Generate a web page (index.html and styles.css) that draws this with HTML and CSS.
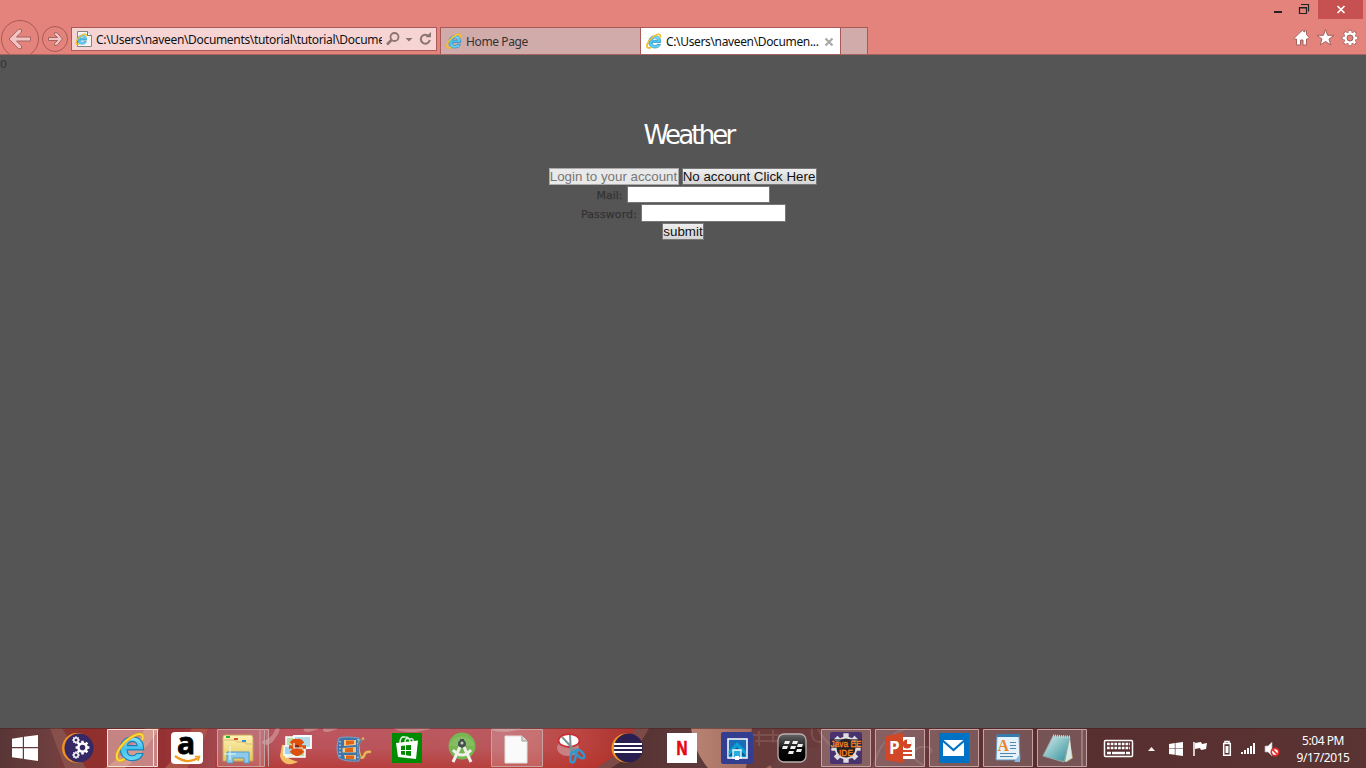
FILE: index.html
```html
<!DOCTYPE html>
<html lang="en">
<head>
<meta charset="utf-8">
<title>Weather</title>
<link rel="stylesheet" href="styles.css">
</head>
<body>
<svg width="0" height="0" class="defs">
  <defs>
    <linearGradient id="blue" x1="0" y1="0" x2="0" y2="1"><stop offset="0" stop-color="#8be6fb"/><stop offset=".5" stop-color="#43c1ed"/><stop offset="1" stop-color="#6fd8f8"/></linearGradient>
    <symbol id="ie" viewBox="0 0 32 32">
      <path fill-rule="evenodd" d="M29.500 19H12.500C12.500 23 15 25 18 25C20 25 21.500 24 22.300 22.700H29C27.500 27.500 23.500 30 17.800 30C10.500 30 5.500 25 5.500 18C5.500 10.500 10.500 5.500 17.800 5.500C25.500 5.500 30 10.500 29.500 19ZM12.800 14.500H22.800C22.500 11.800 20.500 10.200 17.800 10.200C15 10.200 13.200 12 12.800 14.500Z" fill="url(#blue)" stroke="#1682bd" stroke-width="1.200"/>
      <path d="M28 9C30.500 3 26.500 1 20 4.200C10 9 1.500 19.500 1.800 26C2 31.500 6.500 30.500 10 28.500" fill="none" stroke="#e3a416" stroke-width="3.200"/>
      <path d="M28 9C30.500 3 26.500 1 20 4.200C10 9 1.500 19.500 1.800 26C2 31.500 6.500 30.500 10 28.500" fill="none" stroke="#fddc3e" stroke-width="1.800"/>
    </symbol>
    <symbol id="win" viewBox="0 0 26 26"><path d="M0 3.7L10.8 2V12H0ZM12 1.8L26 0V12H12ZM0 13.2H10.8V23.8L0 22.2ZM12 13.2H26V26L12 24Z" fill="#fff"/></symbol>
    <symbol id="gear" viewBox="0 0 24 24"><circle cx="12" cy="12" r="6.5" fill="none" stroke="currentColor" stroke-width="4"/><path d="M12 1V6M12 18V23M1 12H6M18 12H23M4.2 4.2L8 8M16 16L19.8 19.8M4.2 19.8L8 16M16 8L19.8 4.2" stroke="currentColor" stroke-width="4"/></symbol>
    <linearGradient id="gloss" x1="0" y1="0" x2="0" y2="1"><stop offset="0" stop-color="#666"/><stop offset=".45" stop-color="#222"/><stop offset=".5" stop-color="#080808"/><stop offset="1" stop-color="#000"/></linearGradient>
    <linearGradient id="glass" x1="0" y1="0" x2="1" y2="1"><stop offset="0" stop-color="#d9eeee"/><stop offset="1" stop-color="#2c8e98"/></linearGradient>
    <linearGradient id="folder" x1="0" y1="0" x2="0" y2="1"><stop offset="0" stop-color="#fff3b5"/><stop offset="1" stop-color="#e5c75f"/></linearGradient>
  </defs>
</svg>

<header class="chrome">
  <div class="caption">
    <svg width="48" height="19"><path d="M4 12H12" stroke="#222" stroke-width="2"/><path d="M29.500 7.500H36.500V13.500H29.500ZM29 8H37M31 4.500H38.500V11.500" fill="none" stroke="#222" stroke-width="1.200"/></svg>
    <div class="close"><svg width="45" height="19"><path d="M19.5 6L26.5 13M26.5 6L19.5 13" stroke="#fff" stroke-width="1.7"/></svg></div>
  </div>
  <div class="toolbar">
    <svg class="nav" width="71" height="35">
      <g fill="none" stroke="#a95957"><circle cx="20" cy="20" r="18.5"/><circle cx="55" cy="20" r="12.5"/></g>
      <g fill="#f3c3c3" stroke="#a56360" stroke-width="1"><path d="M9 20L18.5 10.300H21.500V13L16.500 18H30.5V22H16.500L21.500 27V29.700H18.500Z"/><path d="M62.500 20L57 13.700H54.500V15.500L57.500 18.500H48.5V21.5H57.500L54.500 24.500V26.300H57Z"/></g>
    </svg>
    <div class="address">
      <svg width="21" height="22"><path d="M5.500 3.500H15.5L19.500 7.500V18.500H5.500Z" fill="#f5f5f5" stroke="#858585"/><path d="M15.500 3.500V7.500H19.500" fill="#fff" stroke="#777"/><use href="#ie" x="3" y="5" width="13" height="12"/></svg>
      <span class="url">C:\Users\naveen\Documents\tutorial\tutorial\Docume</span>
      <svg width="55" height="22"><g fill="none" stroke="#8b7472"><circle cx="12.500" cy="9" r="4" stroke-width="1.800"/><path d="M9.500 12L5 16.500" stroke-width="2.500"/><path d="M46.500 8A4.500 4.500 0 1 0 47.800 12" stroke-width="2"/></g><path d="M23.500 10H30.500L27 13.500ZM43.500 9.300H49V4Z" fill="#8b7472"/></svg>
    </div>
    <div class="tab home"><svg width="16" height="16"><use href="#ie" width="16" height="16"/></svg><span>Home Page</span></div>
    <div class="tab active"><svg width="16" height="16"><use href="#ie" width="16" height="16"/></svg><span>C:\Users\naveen\Documen...</span><svg class="x" width="10" height="10"><path d="M1.500 1.500L8.500 8.500M8.500 1.500L1.500 8.500" stroke="#a9a9a9" stroke-width="2.200"/></svg></div>
    <div class="newtab"></div>
    <svg class="tools" width="70" height="24">
      <g fill="#fff" stroke="#a4615e" stroke-width="1"><path d="M.8 12.500L8 5.500L9.500 4.500L10.500 5.500L11.500 6V4.800H13.500V8.500L16 11.500L15 13H13.500V19H10V14H7.500V19H3.500V13H1.500Z"/><path d="M32.500 3.500L34.600 9.300H41L36 13.100L37.800 19L32.500 15.500L27.200 19L29 13.100L24 9.300H30.400Z"/></g>
      <g class="geardark"><use href="#gear" x="48" y="3" width="18" height="18"/></g><g class="gearlight"><use href="#gear" x="49" y="4" width="16" height="16"/></g><circle cx="57" cy="12" r="3" fill="#e3837c" stroke="#a4615e"/>
    </svg>
  </div>
</header>

<main class="page">
  <div class="count">0</div>
  <h1>Weather</h1>
  <form class="login">
    <div class="buttons"><button class="choice muted" type="button">Login to your account</button><button class="choice second" type="button">No account Click Here</button></div>
    <label class="row mail"><span>Mail:</span><input type="text"></label>
    <label class="row password"><span>Password:</span><input type="password"></label>
    <button class="submit" type="button">submit</button>
  </form>
</main>

<footer class="taskbar">
  <svg class="wallpaper" width="1366" height="40">
    <defs>
      <linearGradient id="wall"><stop offset="0" stop-color="#583536"/><stop offset=".04" stop-color="#70403f"/><stop offset=".055" stop-color="#8e302c"/><stop offset=".12" stop-color="#963133"/><stop offset=".16" stop-color="#a34a50"/><stop offset=".21" stop-color="#bc5660"/><stop offset=".37" stop-color="#b95b61"/><stop offset=".42" stop-color="#be4845"/><stop offset=".46" stop-color="#aa3430"/></linearGradient>
      <linearGradient id="shade" x1="0" y1="0" x2="0" y2="1"><stop offset="0" stop-color="#b52e24" stop-opacity="0"/><stop offset=".5" stop-color="#b52e24" stop-opacity=".1"/><stop offset="1" stop-color="#b52e24" stop-opacity=".6"/></linearGradient>
      <linearGradient id="brown"><stop offset="0" stop-color="#533131"/><stop offset=".22" stop-color="#6a4141"/><stop offset=".35" stop-color="#6d3d40"/><stop offset=".55" stop-color="#582e2f"/><stop offset="1" stop-color="#5a3333"/></linearGradient>
      <linearGradient id="peach"><stop offset="0" stop-color="#b98472"/><stop offset="1" stop-color="#97635b"/></linearGradient>
    </defs>
    <rect width="1366" height="40" fill="url(#wall)"/>
    <rect x="215" width="430" height="40" fill="url(#shade)"/>
    <path d="M50 0L65 40H86L62 0Z" fill="#87504b"/><path d="M145 0C140 12 120 30 105 40H125C142 27 153 10 160 0Z" fill="#b66c54"/><path d="M192 0C185 20 175 30 165 40H187C198 25 205 12 208 0Z" fill="#ac5348"/>
    <g fill="none" stroke="#d2a2a4" stroke-width="4" opacity=".6"><path d="M263 13Q270 20 278 0Q276 10 264 15"/><path d="M308-2Q300 5 318-1M327-1Q320 5 337-1M395-1Q408 5 430-1M492 0Q505 4 520-1"/></g>
    <path d="M635 0C627 17 615 30 596 40H1366V0Z" fill="#7d4a48"/><path d="M649 0C640 18 628 30 611 40H1366V0Z" fill="url(#brown)"/>
    <path d="M691 0Q694 24 708 40H772Q757 18 764 0Z" fill="url(#peach)"/><path d="M752 0H825L818 18L789 24L766 40H746Z" fill="#693b3a"/>
    <g fill="none" stroke="#98706f" stroke-width="2" opacity=".4"><path d="M812 0Q810 15 822 14M818 1Q830 23 850 27M908 0Q880 7 873 40M925 38Q904 27 920 19Q935 18 930 25"/><path d="M752 7H790M755 13H783M759 3V18M773 2V15"/></g>
    <path d="M0 .5H1366" stroke="#452223" opacity=".5"/>
  </svg>
  <div class="apps">
    <svg><use href="#win" x="12" y="7" width="26" height="26"/></svg>
    <svg><circle cx="28" cy="20" r="15" fill="#f39122"/><circle cx="30" cy="20" r="14.500" fill="#352865"/><g class="white"><use href="#gear" x="26" y="12" width="15" height="15"/><use href="#gear" x="23" y="8" width="8" height="8"/><use href="#gear" x="23" y="23" width="8" height="8"/></g></svg>
    <svg><path class="hot" d="M.5 1.500H46.500V38.500H.5ZM47 1.500H50.500V38.500H47"/><use href="#ie" x="8" y="3" width="31" height="32"/></svg>
    <svg><rect x="13" y="4" width="32" height="32" rx="4" fill="#fff"/><text x="19" y="25.500" class="amazon">a</text><path d="M17 28Q29 37 40 30" fill="none" stroke="#f49b1b" stroke-width="2.200"/><path d="M37 28.500H41.500L40 33" fill="none" stroke="#f49b1b" stroke-width="1.500"/></svg>
    <svg><path class="frame" d="M.5 1.500H43V38.500H.5ZM43 1.500H47.500V38.500H43M48 1.500H51.500V38.500"/><path d="M6 9Q6 7 8 7H34Q36 7 36 10V33H6Z" fill="url(#folder)" stroke="#c8a75b"/><path d="M7 12H18L20 14H28L29 16H35" fill="none" stroke="#d6bb6d"/><path d="M9 8H13V10H9Z" fill="#2fae37"/><path d="M17 10H21V12H17Z" fill="#d45030"/><path d="M25 12H29V14H25Z" fill="#348ed1"/><path d="M10 24H32V35H27V30H16V35H10Z" fill="#8dcaea" stroke="#579bc1"/><path d="M13 18V32M7 26H19" stroke="#dcfaff"/></svg>
    <svg><path d="M14 17Q11 30 26 34Q15 38 12 28Z" fill="#f4bf62" stroke="#f4bf62" stroke-width="2"/><path d="M17 9H36V29H17Z" fill="#b9dfb0" stroke="#fff" stroke-width="1.500"/><path d="M15 18H25V27H15Z" fill="#a5d3e8" stroke="#fff" stroke-width="1.500"/><path d="M25 8H42V20H25Z" fill="#b3dcea" stroke="#fff" stroke-width="1.800"/><g stroke="#de500e" stroke-width="3.500"><path d="M28 11V28M20 19H37M22 13L34 25M34 13L22 25M25 11L31 27M31 11L25 27"/></g><circle cx="28" cy="19" r="2.200" fill="#7a2b10"/><path d="M25 15V20H34" fill="none" stroke="#fff" stroke-width="1.200"/></svg>
    <svg><path d="M14 10Q20 8 34 10V33Q20 34 14 30Q10 20 14 10Z" fill="#3e74a8" stroke="#79a5c8"/><path d="M19 12H31V17L19 18ZM17.500 20L31 19V24.500H17.500ZM19 27H31V31.500L20 31Z" fill="#f3c68a"/><path d="M21 12.500H29V16L21 17ZM20 20.500L28 19.500V24H20ZM21 27.500H29V31H21Z" fill="#df6416"/><path d="M15 13V30M33 11V32" stroke="#c9dae8" stroke-width="1.300" stroke-dasharray="1.500 2"/><path d="M39 10Q31 14 34 24Q36 33 39 28Q40 23 46 24" fill="none" stroke="#e6b759" stroke-width="2.500"/><path d="M37 11Q30 19 35 30" fill="none" stroke="#5b83ad" stroke-width="2"/></svg>
    <svg><rect x="12" y="5" width="30" height="30" fill="#008a00"/><path d="M16 15L38 12.500L36 31L18 29Z" fill="#fff"/><path d="M20 15Q20 8 25 9Q30 9 30 14M25 14Q25 9 30 11Q34 10 33 14" fill="none" stroke="#d8eed8" stroke-width="1.500"/><path d="M21 18L25 17.500V22H21ZM26 17.300L31 17V22H26ZM21 23H25V27L21 26.500ZM26 23H31V28L26 27.300Z" fill="#008a00"/></svg>
    <svg><circle cx="27" cy="18" r="13.500" fill="#77b653"/><path d="M14 18A13.500 13.500 0 0 1 40 18Z" fill="#85bd61"/><path d="M27 11V19" stroke="#454e51" stroke-width="4"/><circle cx="27" cy="16" r="4" fill="#454e51"/><circle cx="27" cy="15" r="1.500" fill="#c3d3b6"/><path d="M25 19L18 34M29 19L36 34M18 22Q27 32 36 22" fill="none" stroke="#f0f0ec" stroke-width="3"/></svg>
    <svg><path class="frame" d="M1.500 1.500H52.500V38.500H1.500Z"/><path d="M15 8H32L37 13V35H15Z" fill="#fafafa" stroke="#e3dede"/><path d="M32 8V13H37" fill="#ddd" stroke="#999"/></svg>
    <svg><ellipse cx="25" cy="20" rx="11" ry="8" fill="#c88085"/><ellipse cx="26" cy="12.500" rx="10.500" ry="6.500" fill="#fff" stroke="#c93136" stroke-width="1.800"/><path d="M19 9L34 25M27 7L28 25" stroke="#7b9292" stroke-width="2"/><g fill="none" stroke="#3098ce" stroke-width="2.400"><ellipse cx="30" cy="29" rx="2.500" ry="5.500" transform="rotate(10 30 29)"/><ellipse cx="37" cy="26" rx="2.700" ry="5.500" transform="rotate(-45 37 26)"/></g></svg>
    <svg><circle cx="26" cy="20" r="14.500" fill="#f19122"/><circle cx="28.500" cy="20" r="14.500" fill="#292051"/><path d="M14 16H42M14 20H42M14 24H42" stroke="#fff" stroke-width="2"/></svg>
    <svg><path d="M12 5H42V35H12Z" fill="#fff"/><text x="21.500" y="27" class="netflix" textLength="11" lengthAdjust="spacingAndGlyphs">N</text></svg>
    <svg><rect x="11" y="4" width="32" height="32" rx="2" fill="#343e91"/><path d="M18 11H37V30H18Z" fill="#1b6cb6" stroke="#fff" stroke-width="1.500"/><path d="M18.700 23L27 14L36 23V29H18.700Z" fill="#0aa0d6"/><path d="M18.700 28L27 19L36 28Z" fill="#075b96"/><path d="M23 22H31V30H23Z" fill="#29aee0" stroke="#fff" stroke-width="1.300"/><path d="M25 28H29V32H25Z" fill="#fff"/></svg>
    <svg><rect x="14" y="6" width="28" height="28" rx="6" fill="url(#gloss)" stroke="#b8aeae" stroke-width="1.300"/><path d="M21 13H26L25 16H20ZM29 13H34L33 16H28ZM19 18H24L23 21H18ZM27 18H32L31 21H26ZM34 16H39L38 19H33ZM25 23H30L29 26H24ZM33 21H38L37 24H32Z" fill="#eee"/></svg>
    <svg><path class="frame" d="M1.500 1.500H50.500V38.500H1.500Z"/><rect x="10" y="4" width="32" height="32" rx="2" fill="#49336f"/><g class="javagear"><use href="#gear" x="10" y="4" width="32" height="32"/></g><circle cx="26" cy="20" r="9.500" fill="#272323"/><path d="M10 11H42V20H10Z" fill="#2b2027" opacity=".65"/><text class="java" x="10.500" y="19.300" textLength="31" lengthAdjust="spacingAndGlyphs">Java EE</text><text class="java" x="19" y="28.300" textLength="14" lengthAdjust="spacingAndGlyphs">IDE</text></svg>
    <svg><path class="frame" d="M1.500 1.500H50.500V38.500H1.500Z"/><path d="M25 9H41V31H25Z" fill="#fff"/><circle cx="33" cy="16" r="4.500" fill="#d24726"/><path d="M33 16V11.500A4.500 4.500 0 0 1 37.500 16Z" fill="#fff"/><path d="M29 23H38M29 27H38" stroke="#d24726" stroke-width="2"/><path d="M11 8L29 5V35L11 32Z" fill="#d24726"/><text x="15" y="26" class="ppt">P</text></svg>
    <svg><path class="frame" d="M1.500 1.500H50.500V38.500H1.500Z"/><path d="M11 5H41V35H11Z" fill="#0072c6"/><path d="M15 12H36V28H15Z" fill="#fff"/><path d="M14 12L25.500 22L37 12" fill="none" stroke="#0072c6" stroke-width="2.200"/></svg>
    <svg><path class="frame" d="M1.500 1.500H50.500V38.500H1.500Z"/><path d="M15 7H37L38 32H14Z" fill="#e4f2fc" stroke="#6592b8"/><path d="M15 6H37V9H15Z" fill="#357bb0"/><text x="15.500" y="23" class="wordpad">A</text><path d="M28 14.500H34M28 17.500H34M28 20.500H34M18 25.500H34M18 28.500H31" stroke="#5784aa"/><path d="M38 26L32 34H38Z" fill="#8bb8db"/></svg>
    <svg><path class="frame" d="M1.500 1.500H46V38.500H1.500ZM46 1.500H50.500V38.500H46"/><path d="M33 9L37 30L31 34H29Z" fill="#b2a36c"/><path d="M17 8L34 9L28 34L7 28Z" fill="url(#glass)" stroke="#93aaa9"/><path d="M34 10L36 30L29 34Z" fill="#d6e9e7"/><path d="M17 8L34 9" stroke="#c7d5d1" stroke-width="3" stroke-dasharray="1 1"/></svg>
  </div>
  <div class="tray">
    <svg width="196" height="40">
      <rect x="14.500" y="12.500" width="28" height="16" rx="1" fill="none" stroke="#fff" stroke-width="1.500"/><path d="M17 16H40M17 20H40" stroke="#fff" stroke-width="2.600" stroke-dasharray="2.700 1"/><path d="M17 25H40" stroke="#fff" stroke-width="2.600" stroke-dasharray="4 1 13 1"/>
      <path d="M58 23L61.500 19L65 23Z" fill="#f7eff1"/><use href="#win" x="79" y="14" width="14" height="14"/>
      <path d="M104 14V28" stroke="#fff" stroke-width="1.500"/><path d="M105 15L111 14L112 16L117 15L116 21L111 22L110 20L105 21Z" fill="#fff"/>
      <path d="M133.700 15.500H140.300V27.300H133.700ZM135 15V13.500H139V15" fill="none" stroke="#fff" stroke-width="1.500"/><path d="M135.500 18H138.500V25H135.500Z" fill="#fff"/>
      <path d="M151 24H153V26H151ZM154 22H156V26H154ZM157 20H159V26H157ZM160 18H162V26H160ZM163 15H165V26H163Z" fill="#fff"/><path d="M175 18H178L182 14V28L178 24H175Z" fill="#fff" stroke="#aaa" stroke-width=".7"/><circle cx="185" cy="24" r="3.700" fill="#fff" stroke="#e12828" stroke-width="1.700"/><path d="M182.500 21.500L187.500 26.500" stroke="#e12828" stroke-width="1.700"/>
    </svg>
    <div class="clock"><span class="time">5:04 PM</span><span class="date">9/17/2015</span></div>
  </div>
</footer>
</body>
</html>
```

FILE: styles.css
```css
* { box-sizing: border-box; }
body { margin: 0; width: 1366px; height: 768px; overflow: hidden; display: flex; flex-direction: column; background: #555; font-family: "Noto Sans", "Open Sans", sans-serif; }
svg { display: block; flex: none; overflow: visible; }
.defs { position: absolute; }
.chrome { height: 55px; background: #e3837c; border-bottom: 1px solid #a86460; overflow: hidden; flex: none; }
.caption { height: 19px; display: flex; justify-content: flex-end; padding-right: 3px; }
.close { background: #c75050; }
.toolbar { height: 35px; display: flex; align-items: flex-start; }
.nav { overflow: hidden; }
.address { width: 366px; height: 24px; margin: 8px 3px 0 0; display: flex; border: 1px solid #a95957; background: #f6d4d3; }
.url { width: 286px; margin-left: 3px; overflow: hidden; white-space: nowrap; font-size: 12px; line-height: 23px; letter-spacing: -.33px; color: #111; }
.address > svg:last-child { width: 54px; }
.tab { height: 27px; margin-top: 8px; border: 1px solid #a95957; border-bottom: 0; display: flex; align-items: center; padding: 1px 0 0 5px; font-size: 12px; color: #333; background: #d1aaaa; white-space: nowrap; }
.tab > svg:first-child { margin-bottom: 1px; }
.tab span { margin-left: 4px; letter-spacing: -.38px; }
.home { width: 201px; }
.active { width: 201px; margin-left: -1px; background: #fff; color: #111; }
.active span { width: 155px; letter-spacing: -.35px; }
.x { margin-left: 3px; }
.newtab { width: 28px; height: 27px; margin: 8px 0 0 -1px; background: #d1aaaa; border: 1px solid #a95957; border-bottom: 0; }
.tools { margin: 7px 3px 0 auto; }
.geardark { color: #a4615e; }
.gearlight, .white { color: #fff; }
.page { height: 673px; flex: none; font-family: "DejaVu Sans", sans-serif; font-size: 11px; color: #333; }
.count { height: 18px; line-height: 20px; }
h1 { margin: 45px 0 0; padding-left: 11px; text-align: center; color: #fff; font-size: 26px; font-weight: 400; line-height: 34px; letter-spacing: -2.8px; }
.login { margin-top: 16px; display: flex; flex-direction: column; align-items: center; }
.buttons { display: flex; gap: 3px; height: 18px; padding-right: 1px; }
button { height: 17px; padding: 0; border: 1px solid #777; background: linear-gradient(#eee, #d5d5d5); color: #111; font: 13.333px/14px "Liberation Sans", sans-serif; white-space: nowrap; }
.choice { width: 130px; }
.choice.second { width: 135px; }
.muted { color: #777; border-color: #aaa; background: #e9e9e9; }
.row { display: flex; height: 18px; align-items: flex-start; gap: 4px; }
.row span { line-height: 20px; -webkit-text-stroke: .25px #333; }
.password { height: 19px; padding-left: 1px; }
.password span { line-height: 22px; letter-spacing: .1px; }
input { width: 143px; height: 17px; border: 1px solid #777; padding: 0; background: #fff; }
.password input { width: 145px; height: 18px; }
.submit { width: 42px; }
.taskbar { position: relative; height: 40px; flex: none; display: flex; }
.wallpaper { position: absolute; inset: 0; overflow: hidden; }
.apps { position: relative; width: 1090px; display: grid; grid-template-columns: 49px 58px 51px 59px 52px 56px 55px 55px 55px 53px 57px 55px 55px 54px 56px repeat(5, 54px); }
.apps svg { width: 100%; height: 40px; }
.hot { fill: #e8bdba99; stroke: #f8dedc; }
.frame { fill: #ffffff2e; stroke: #c6a2a2; stroke-width: 1; }
.amazon { font: 700 30px "Open Sans", sans-serif; fill: #000; stroke: #000; stroke-width: .8px; }
.netflix { font: 700 20px "Liberation Sans", sans-serif; fill: #e50914; stroke: #e50914; stroke-width: .7px; }
.javagear { color: #ddd; }
.java { font: 9.5px/1 "Liberation Sans", sans-serif; fill: #ff841f; stroke: #ff841f; stroke-width: .3px; }
.ppt { font: 700 17px "Open Sans", sans-serif; fill: #fff; }
.wordpad { font: 700 16px "Liberation Serif", serif; fill: #eb842c; }
.tray { position: relative; width: 276px; display: flex; }
.clock { width: 74px; padding-top: 4px; display: flex; flex-direction: column; align-items: center; color: #fff; font-size: 12px; line-height: 17px; letter-spacing: -.45px; }
```
